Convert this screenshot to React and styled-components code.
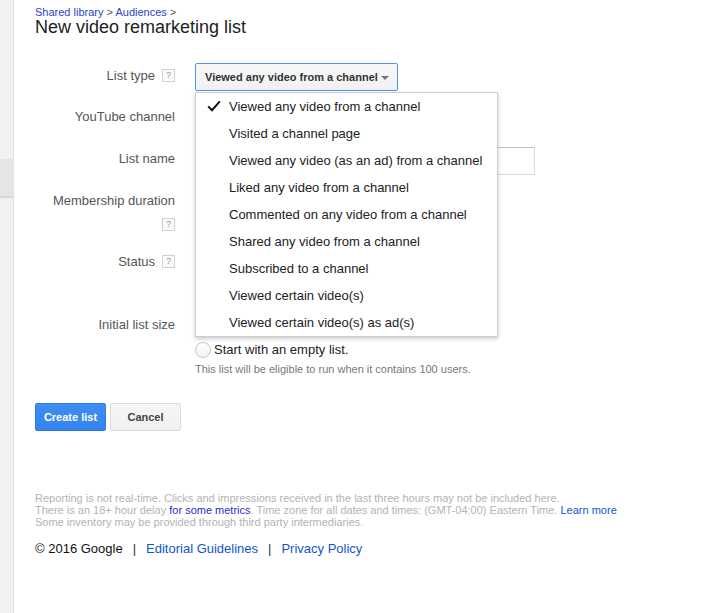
import React from 'react'
import styled, { createGlobalStyle } from 'styled-components'

const GlobalStyle = createGlobalStyle`
  html, body {
    margin: 0;
    padding: 0;
    background: #fff;
    font-family: "Liberation Sans", Arial, sans-serif;
  }
`

const Page = styled.div`
  display: flex;
  min-height: 613px;
  background: #fff;
`

const SideRail = styled.div`
  width: 14px;
  flex-shrink: 0;
  background: #f1f1f1;
  border-right: 1px solid #e2e2e2;
  padding-top: 159px;
  box-sizing: border-box;
`

const RailItem = styled.div`
  height: 37px;
  background: #e5e5e5;
  border-bottom: 2px solid #d8d8d8;
`

const Main = styled.div`
  flex: 1;
  padding: 6px 0 0 21px;
`

const Crumbs = styled.div`
  font-size: 11px;
  line-height: 12px;
  color: #555;
`

const CrumbLink = styled.a`
  color: #2b3fc9;
  text-decoration: none;
`

const Title = styled.h1`
  margin: 0;
  font-size: 18px;
  line-height: 18px;
  font-weight: normal;
  color: #222;
`

const Form = styled.div`
  margin-top: 27px;
  display: flex;
  flex-direction: column;
`

const Row = styled.div`
  display: grid;
  grid-template-columns: 140px 1fr;
  column-gap: 20px;
  height: ${p => (p.$h ? `${p.$h}px` : 'auto')};
`

const Label = styled.div`
  text-align: right;
  font-size: 13px;
  line-height: 24px;
  padding-top: 1px;
  color: #555;
`

const Help = styled.span`
  display: inline-block;
  width: 11px;
  height: 11px;
  margin-left: 7px;
  border: 1px solid #d0d0d0;
  background: #fafafa;
  color: #999;
  font-size: 9px;
  line-height: 11px;
  text-align: center;
  vertical-align: middle;
  position: relative;
  top: -1px;
`

const Field = styled.div`
  position: relative;
`

const SelectButton = styled.div`
  width: 203px;
  height: 28px;
  box-sizing: border-box;
  display: flex;
  align-items: center;
  justify-content: space-between;
  padding: 0 8px 0 9px;
  border: 1px solid #4d90fe;
  border-radius: 2px;
  background: linear-gradient(#f8f8f8, #f1f1f1);
  font-size: 11px;
  font-weight: bold;
  color: #333;
`

const Arrow = styled.span`
  width: 0;
  height: 0;
  border-left: 4px solid transparent;
  border-right: 4px solid transparent;
  border-top: 4px solid #777;
  margin-top: 1px;
`

const Menu = styled.ul`
  position: absolute;
  top: 29px;
  left: 0;
  z-index: 10;
  width: 303px;
  box-sizing: border-box;
  margin: 0;
  padding: 0;
  list-style: none;
  background: #fff;
  border: 1px solid #ccc;
  box-shadow: 0 2px 4px rgba(0, 0, 0, 0.2);
`

const MenuItem = styled.li`
  position: relative;
  height: 27px;
  line-height: 27px;
  padding-left: 33px;
  font-size: 13px;
  color: #222;
  white-space: nowrap;
`

const Check = styled.svg`
  position: absolute;
  left: 11px;
  top: 7px;
`

const TextInput = styled.div`
  width: ${p => p.$w}px;
  height: 28px;
  box-sizing: border-box;
  margin-top: 1px;
  border: 1px solid #d9d9d9;
  border-top-color: #c0c0c0;
  background: #fff;
`

const Option = styled.label`
  display: flex;
  align-items: center;
  height: 25px;
  font-size: 13px;
  color: #222;
`

const Radio = styled.span`
  width: 14px;
  height: 14px;
  border-radius: 50%;
  border: 1px solid #c6c6c6;
  background: linear-gradient(#fff, #f3f3f3);
  margin-right: 3px;
  flex-shrink: 0;
`

const Note = styled.div`
  font-size: 11px;
  line-height: 14px;
  color: #777;
`

const Buttons = styled.div`
  display: flex;
  gap: 4px;
  margin-top: 27px;
`

const Button = styled.button`
  height: 28px;
  width: 71px;
  padding: 0;
  border-radius: 2px;
  font-family: inherit;
  font-size: 11px;
  font-weight: bold;
  border: 1px solid ${p => (p.$primary ? '#2f7ae8' : '#dcdcdc')};
  background: ${p => (p.$primary ? 'linear-gradient(#3f8cf3, #3583ee)' : 'linear-gradient(#f5f5f5, #f1f1f1)')};
  color: ${p => (p.$primary ? '#fff' : '#444')};
`

const Disclaimer = styled.div`
  margin-top: 61px;
  font-size: 11px;
  line-height: 12px;
  color: #b3b3b3;
`

const DisclaimerLink = styled.a`
  color: ${p => p.$tone || '#15c'};
  text-decoration: none;
`

const FooterLinks = styled.div`
  margin-top: 13px;
  display: flex;
  align-items: center;
  font-size: 13px;
  line-height: 16px;
  color: #111;
`

const Sep = styled.span`
  margin: 0 10px;
  color: #333;
`

const FooterLink = styled.a`
  color: #15c;
  text-decoration: none;
`

const listTypes = [
  'Viewed any video from a channel',
  'Visited a channel page',
  'Viewed any video (as an ad) from a channel',
  'Liked any video from a channel',
  'Commented on any video from a channel',
  'Shared any video from a channel',
  'Subscribed to a channel',
  'Viewed certain video(s)',
  'Viewed certain video(s) as ad(s)',
]

export default function App() {
  return (
    <Page>
      <GlobalStyle />
      <SideRail>
        <RailItem />
      </SideRail>
      <Main>
        <Crumbs>
          <CrumbLink>Shared library</CrumbLink> &gt; <CrumbLink>Audiences</CrumbLink> &gt;
        </Crumbs>
        <Title>New video remarketing list</Title>

        <Form>
          <Row $h={41}>
            <Label>List type<Help>?</Help></Label>
            <Field>
              <SelectButton>
                Viewed any video from a channel
                <Arrow />
              </SelectButton>
              <Menu>
                {listTypes.map((t, i) => (
                  <MenuItem key={t}>
                    {i === 0 && (
                      <Check width="14" height="12" viewBox="0 0 14 12">
                        <path d="M1.2 6.4 L5 10.2 L12.8 1.4" fill="none" stroke="#111" strokeWidth="2" />
                      </Check>
                    )}
                    {t}
                  </MenuItem>
                ))}
              </Menu>
            </Field>
          </Row>
          <Row $h={42}>
            <Label>YouTube channel</Label>
            <Field>
              <TextInput $w={250} />
            </Field>
          </Row>
          <Row $h={42}>
            <Label>List name</Label>
            <Field>
              <TextInput $w={340} />
            </Field>
          </Row>
          <Row $h={61}>
            <Label>Membership duration<Help>?</Help></Label>
            <Field>
              <TextInput $w={60} />
            </Field>
          </Row>
          <Row $h={63}>
            <Label>Status<Help>?</Help></Label>
            <Field>
              <Option><Radio /></Option>
              <Option><Radio /></Option>
            </Field>
          </Row>
          <Row>
            <Label>Initial list size</Label>
            <Field>
              <Option><Radio /></Option>
              <Option><Radio />Start with an empty list.</Option>
              <Note>This list will be eligible to run when it contains 100 users.</Note>
            </Field>
          </Row>
        </Form>

        <Buttons>
          <Button $primary>Create list</Button>
          <Button>Cancel</Button>
        </Buttons>

        <Disclaimer>
          Reporting is not real-time. Clicks and impressions received in the last three hours may not be included here.
          <br />
          There is an 18+ hour delay <DisclaimerLink $tone="#2a2ad0">for some metrics</DisclaimerLink>. Time zone for all dates and times: (GMT-04:00) Eastern Time. <DisclaimerLink>Learn more</DisclaimerLink>
          <br />
          Some inventory may be provided through third party intermediaries.
        </Disclaimer>

        <FooterLinks>
          © 2016 Google
          <Sep>|</Sep>
          <FooterLink>Editorial Guidelines</FooterLink>
          <Sep>|</Sep>
          <FooterLink>Privacy Policy</FooterLink>
        </FooterLinks>
      </Main>
    </Page>
  )
}
